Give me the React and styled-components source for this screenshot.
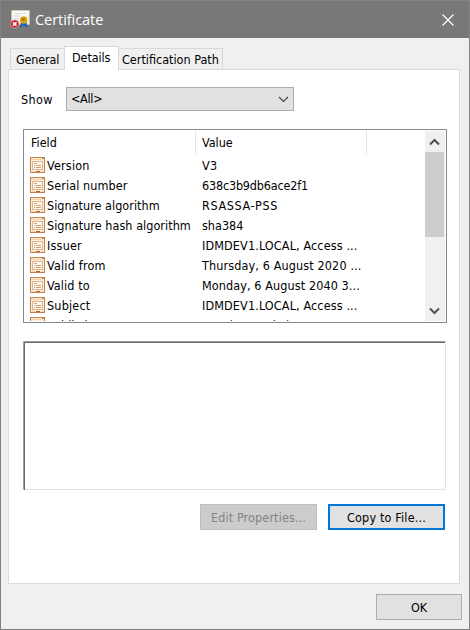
import React from "react";
import styled, { createGlobalStyle } from "styled-components";

const Global = createGlobalStyle`
  * { box-sizing: border-box; }
  body { margin: 0; font-family: "DejaVu Sans Condensed", "DejaVu Sans", sans-serif; font-stretch: condensed; font-size: 12.5px; color: #000; }
`;

const Window = styled.main`
  width: 470px; height: 630px; display: flex; flex-direction: column;
  border: 1px solid #838383; background: #f0f0f0; overflow: hidden;
`;
const TitleBar = styled.header`
  height: 37px; flex: none; display: flex; align-items: center;
  padding: 0 14px 0 9px; background: #787878; color: #fff;
`;
const Title = styled.h1`
  margin: 0 auto 0 3px; font: 400 14.5px/20px "Open Sans", "Noto Sans", sans-serif;
  font-stretch: normal; letter-spacing: -0.05px;
`;
const Text = styled.span`
  white-space: pre; line-height: 16px; letter-spacing: ${(p) => p.$ls || 0}px;
`;
const Tabs = styled.nav`
  height: 31px; flex: none; display: flex; align-items: flex-end; padding: 0 0 0 9px;
`;
const Tab = styled.button`
  appearance: none; font: inherit; color: inherit; white-space: pre;
  width: ${(p) => p.$w}px; height: ${(p) => (p.$active ? 24 : 21)}px;
  margin: 0 0 ${(p) => (p.$active ? -1 : 0)}px; padding: ${(p) => (p.$active ? "0 0 2px 7px" : p.$pad)};
  display: flex; align-items: center; position: relative; z-index: ${(p) => (p.$active ? 1 : 0)};
  border: 1px solid #d9d9d9; border-bottom: 0;
  border-left-width: ${(p) => (p.$last ? 0 : 1)}px;
  border-right-width: ${(p) => (p.$first ? 0 : 1)}px;
  background: ${(p) => (p.$active ? "#fff" : "#f0f0f0")};
`;
const Panel = styled.section`
  width: 452px; height: 515px; flex: none; margin-left: 7px; padding: 17px 12px 0 14px;
  border: 1px solid #dcdcdc; background: #fff;
`;
const ShowRow = styled.div`
  height: 24px; display: flex; align-items: center; margin-left: -2px;
`;
const ShowLabel = styled.label`
  width: 45px; padding-top: 1px; line-height: 16px; letter-spacing: 0.4px;
`;
const Select = styled.div`
  width: 228px; height: 24px; display: flex; align-items: center; justify-content: space-between;
  padding: 0 4px; border: 1px solid #adadad; background: #e1e1e1;
`;
const ListBox = styled.div`
  width: 424px; height: 194px; margin-top: 18px; padding: 1px; display: flex;
  border: 1px solid #828790; background: #fff;
`;
const Table = styled.div`flex: 1; height: 190px; overflow: hidden;`;
const HeadRow = styled.div`height: 24px; display: flex; align-items: center;`;
const HeadCell = styled.div`
  width: ${(p) => p.$w}px; height: 24px; padding: 0 0 0 6px; display: flex; align-items: center;
  border-right: 1px solid #e5e5e5;
`;
const Row = styled.div`
  height: 20px; display: grid; grid-template-columns: 17px 155px 1fr; align-items: center; padding-left: 5px;
  ${Text} { padding-top: 2px; }
`;
const ScrollBar = styled.div`
  width: 20px; height: 190px; display: flex; flex-direction: column; background: #f0f0f0;
`;
const ScrollButton = styled.div`
  height: 21px; width: 19px; display: flex; align-items: center; justify-content: center;
`;
const Thumb = styled.div`width: 19px; height: 85px; margin-bottom: auto; background: #cdcdcd;`;
const Preview = styled.div`
  width: 423px; height: 149px; margin-top: 18px; padding: 0;
  border: 1px solid; border-color: #a0a0a0 #e3e3e3 #e3e3e3 #a0a0a0;
  &::before { content: ""; display: block; height: 100%; border: solid #696969; border-width: 1px 0 0 1px; }
`;
const Actions = styled.div`display: flex; justify-content: flex-end; gap: 11px; margin: 14px 2px 0 0;`;
const Button = styled.button`
  appearance: none; font: inherit; width: ${(p) => p.$w}px; height: 26px; padding: 1px 0 0;
  display: flex; align-items: center; justify-content: center;
  border: ${(p) => (p.$primary ? "2px solid #0078d7" : "1px solid #adadad")};
  background: #e1e1e1; color: #000;
  &:disabled { border-color: #bfbfbf; background: #ccc; color: #838383; }
`;
const Footer = styled.footer`display: flex; justify-content: flex-end; margin: 10px 7px 0 0;`;
const Icon = styled.svg`display: block; flex: none;`;

const CertIcon = () => (
  <Icon width="22" height="22" viewBox="0 0 22 22">
    <path d="M1.700 1.500h17.600v13.800H1.700z" fill="#fbfaf4" stroke="#d3c8b4" />
    <path d="M5 4.500h11M4 7h7M4 9.500h5" stroke="#d5dae0" fill="none" />
    <path d="M11 13l-1.200 5.500 2.400-.8 1.300-2 1.700 2.300 2.300.4-1-5.400z" fill="#1766c2" />
    <circle cx="13.700" cy="11" r="3.800" fill="#dda514" />
    <circle cx="13.300" cy="10.500" r="1.700" fill="#b07f0a" />
    <circle cx="4.800" cy="15" r="4.100" fill="#c92630" stroke="#dfa9ac" strokeWidth=".7" />
    <path d="M3.100 13.300l3.400 3.400M6.500 13.300l-3.400 3.400" stroke="#fff" strokeWidth="1.500" />
  </Icon>
);

const FieldIcon = () => (
  <Icon width="15" height="16" viewBox="0 0 15 16" shapeRendering="crispEdges">
    <rect x=".5" y=".5" width="14" height="15" rx="1" fill="#ffecd9" stroke="#bd8650" />
    <path d="M1 2.500h11" stroke="#fbcf9f" />
    <path d="M12 1.500h2" stroke="#bd8650" />
    <path d="M2.500 4.500h10v8h-10z" fill="#fffaf3" stroke="#ddb48a" />
    <path d="M4 6.500h3M4 8.500h1M6 8.500h5M4 10.500h1M6 10.500h5" stroke="#cf9c6b" />
    <path d="M6 14.500h4" stroke="#9c6a3a" />
    <path d="M2 14.500h3M11 14.500h2" stroke="#fbcf9f" />
  </Icon>
);

const rows = [
  ["Version", 0.2, "V3", 0.2],
  ["Serial number", 0.1, "638c3b9db6ace2f1", -0.18],
  ["Signature algorithm", 0.03, "RSASSA-PSS", 0.6],
  ["Signature hash algorithm", 0.05, "sha384", 0],
  ["Issuer", 0.2, "IDMDEV1.LOCAL, Access ...", 0.13],
  ["Valid from", 0.2, "Thursday, 6 August 2020 ...", 0.13],
  ["Valid to", 0.1, "Monday, 6 August 2040 3...", 0.1],
  ["Subject", 0.2, "IDMDEV1.LOCAL, Access ...", 0.13],
  ["Public key", 0.1, "RSA (4096 Bits)", 0],
];

export default function App() {
  return (
    <>
      <Global />
      <Window>
        <TitleBar>
          <CertIcon />
          <Title>Certificate</Title>
          <Icon width="14" height="14" viewBox="0 0 14 14">
            <path d="M1.500 1.500l11 11M12.500 1.500l-11 11" stroke="#fff" strokeWidth="1.200" />
          </Icon>
        </TitleBar>
        <Tabs>
          <Tab $first $w={54} $pad="2px 0 0 5px"><Text $ls={-0.15}>General</Text></Tab>
          <Tab $active $w={55}><Text $ls={-0.1}>Details</Text></Tab>
          <Tab $last $w={104} $pad="2px 0 0 3px"><Text>Certification Path</Text></Tab>
        </Tabs>
        <Panel>
          <ShowRow>
            <ShowLabel>Show</ShowLabel>
            <Select>
              <Text $ls={-0.3}>{"<All>"}</Text>
              <Icon width="11" height="7" viewBox="0 0 11 7">
                <path d="M1 1l4.500 4.500L10 1" fill="none" stroke="#444" strokeWidth="1.200" />
              </Icon>
            </Select>
          </ShowRow>
          <ListBox>
            <Table>
              <HeadRow>
                <HeadCell $w={171}><Text>Field</Text></HeadCell>
                <HeadCell $w={171}><Text>Value</Text></HeadCell>
              </HeadRow>
              {rows.map(([field, fieldSpacing, value, valueSpacing]) => (
                <Row key={field}>
                  <FieldIcon />
                  <Text $ls={fieldSpacing}>{field}</Text>
                  <Text $ls={valueSpacing}>{value}</Text>
                </Row>
              ))}
            </Table>
            <ScrollBar>
              <ScrollButton>
                <Icon width="11" height="8" viewBox="0 0 11 8"><path d="M1 6.500l4.500-4.500L10 6.500" fill="none" stroke="#505050" strokeWidth="2" /></Icon>
              </ScrollButton>
              <Thumb />
              <ScrollButton>
                <Icon width="11" height="8" viewBox="0 0 11 8"><path d="M1 1.500L5.500 6 10 1.500" fill="none" stroke="#505050" strokeWidth="2" /></Icon>
              </ScrollButton>
            </ScrollBar>
          </ListBox>
          <Preview />
          <Actions>
            <Button disabled $w={117}><Text $ls={0.12}>Edit Properties...</Text></Button>
            <Button $primary $w={117}><Text $ls={0.17}>Copy to File...</Text></Button>
          </Actions>
        </Panel>
        <Footer><Button $w={86}><Text>OK</Text></Button></Footer>
      </Window>
    </>
  );
}
